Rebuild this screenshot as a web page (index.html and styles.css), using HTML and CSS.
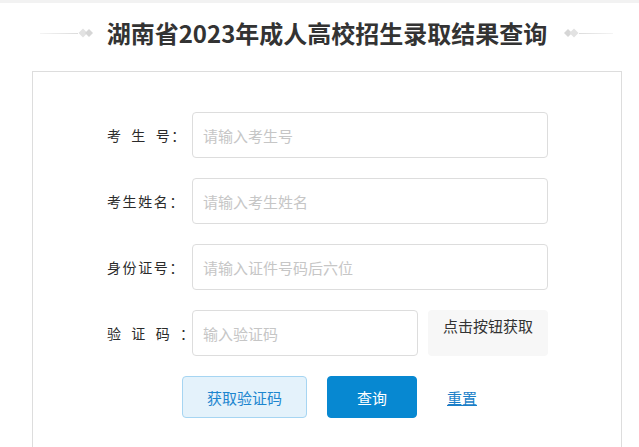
FILE: index.html
```html
<!DOCTYPE html>
<html lang="zh-CN">
<head>
<meta charset="utf-8">
<title>湖南省2023年成人高校招生录取结果查询</title>
<link rel="stylesheet" href="styles.css">
</head>
<body>
<div class="topbar"></div>
<header class="header">
  <span class="deco deco-left">
    <span class="line line-left"></span>
    <svg class="diamonds" width="16" height="10" viewBox="0 0 16 10"><path d="M5 0.5 L9.5 5 L5 9.5 L0.5 5 Z" fill="#e2e2e2"/><path d="M11 1 L15 5 L11 9 L7 5 Z" fill="#d6d6d6"/></svg>
  </span>
  <h1 class="title">湖南省2023年成人高校招生录取结果查询</h1>
  <span class="deco deco-right">
    <svg class="diamonds" width="16" height="10" viewBox="0 0 16 10"><path d="M5 1 L9 5 L5 9 L1 5 Z" fill="#d6d6d6"/><path d="M11 0.5 L15.5 5 L11 9.5 L6.5 5 Z" fill="#e2e2e2"/></svg>
    <span class="line line-right"></span>
  </span>
</header>
<main class="card">
  <form class="form">
    <div class="row">
      <label class="label">考 生 号：</label>
      <input class="input" type="text" placeholder="请输入考生号">
    </div>
    <div class="row">
      <label class="label">考生姓名：</label>
      <input class="input" type="text" placeholder="请输入考生姓名">
    </div>
    <div class="row">
      <label class="label">身份证号：</label>
      <input class="input" type="text" placeholder="请输入证件号码后六位">
    </div>
    <div class="row">
      <label class="label">验 证 码 ：</label>
      <input class="input input-short" type="text" placeholder="输入验证码">
      <div class="captcha">点击按钮获取</div>
    </div>
    <div class="actions">
      <button type="button" class="btn btn-light">获取验证码</button>
      <button type="button" class="btn btn-primary">查询</button>
      <a class="reset" href="#">重置</a>
    </div>
  </form>
</main>
</body>
</html>
```
FILE: styles.css
```css
* { box-sizing: border-box; }
html, body { margin: 0; padding: 0; background: #fff; }
body {
  font-family: "Noto Sans CJK SC", "Noto Sans", sans-serif;
  color: #333;
  width: 639px;
  height: 447px;
  overflow: hidden;
}
.topbar { height: 3px; background: #f2f2f2; }
.header {
  height: 60px;
  display: flex;
  align-items: center;
  justify-content: center;
  padding-left: 14px;
  margin-bottom: 8px;
}
.title {
  margin: 0 16px 0 13px;
  font-size: 24px;
  font-weight: 700;
  color: #333;
  letter-spacing: 0;
  line-height: 32px;
}
.deco { display: flex; align-items: center; }
.diamonds { display: block; }
.line { height: 1px; display: block; }
.line-left { width: 38px; background: linear-gradient(to right, #f4f4f4, #dcdcdc); }
.line-right { width: 34px; background: linear-gradient(to left, #f4f4f4, #dcdcdc); }

.card {
  margin: 0 17px 0 32px;
  border: 1px solid #ddd;
  border-bottom: none;
  height: 376px;
  padding-top: 40px;
}
.form { display: flex; flex-direction: column; gap: 20px; }
.row { display: flex; align-items: center; padding-left: 74px; }
.label {
  width: 85px;
  font-size: 14px;
  letter-spacing: 1.6px;
  word-spacing: 4px;
  color: #2b2b2b;
  white-space: pre;
}
.input {
  width: 356px;
  height: 46px;
  border: 1px solid #ddd;
  border-radius: 4px;
  padding: 0 10px;
  font-family: inherit;
  font-size: 15px;
  color: #333;
  outline: none;
}
.input::placeholder { color: #c6c6c6; }
.input-short { width: 226px; }
.captcha {
  width: 120px;
  height: 46px;
  margin-left: 10px;
  background: #f7f7f7;
  border-radius: 4px;
  font-size: 15px;
  line-height: 20px;
  padding-top: 6px;
  text-align: center;
  color: #333;
}
.actions {
  display: flex;
  align-items: center;
  padding-left: 149px;
}
.btn {
  height: 42px;
  border-radius: 4px;
  font-family: inherit;
  font-size: 15px;
  cursor: pointer;
  padding: 0;
}
.btn-light {
  width: 125px;
  background: #e4f2fb;
  border: 1px solid #a6d5f2;
  color: #1d86cf;
}
.btn-primary {
  width: 90px;
  margin-left: 20px;
  background: #0788d1;
  border: 1px solid #0788d1;
  color: #fff;
}
.reset {
  margin-left: 30px;
  font-size: 15px;
  color: #1b7fc8;
  text-decoration: underline;
}
```
